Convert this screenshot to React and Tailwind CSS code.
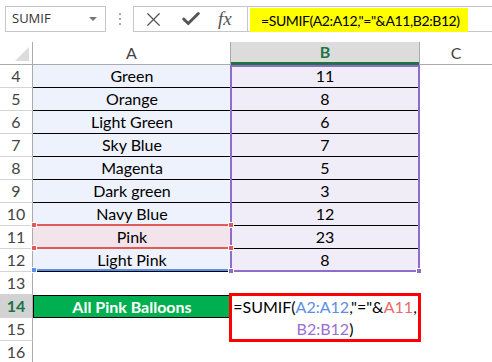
import { X, Check } from 'lucide-react';

const rows = [
  { n: 4, a: 'Green', b: 11 },
  { n: 5, a: 'Orange', b: 8 },
  { n: 6, a: 'Light Green', b: 6 },
  { n: 7, a: 'Sky Blue', b: 7 },
  { n: 8, a: 'Magenta', b: 5 },
  { n: 9, a: 'Dark green', b: 3 },
  { n: 10, a: 'Navy Blue', b: 12 },
  { n: 11, a: 'Pink', b: 23, pink: true },
  { n: 12, a: 'Light Pink', b: 8 },
];

const cellFont = { fontFamily: 'Lato, "Open Sans", sans-serif' };

const Handle = ({ className }) => (
  <div className={`absolute w-[6px] h-[6px] border border-white ${className}`}></div>
);

const App = () => {
  return (
    <div className="w-[492px] h-[362px] bg-white overflow-hidden text-[#222]" style={cellFont}>
      {/* Formula bar */}
      <div className="h-[42px] flex items-start pt-[6px] pl-[5px]">
        <div className="w-[101px] h-[26px] border border-[#c6c6c6] flex items-center justify-between pl-[6px] pr-[6px]">
          <span className="text-[13px] text-[#333]" style={{ fontFamily: '"Open Sans", sans-serif' }}>SUMIF</span>
          <span className="w-0 h-0 border-l-[4px] border-r-[4px] border-t-[4px] border-l-transparent border-r-transparent border-t-[#777] mr-[2px]"></span>
        </div>
        <div className="w-[27px] h-[26px] flex flex-col items-center justify-center gap-[3px]">
          <span className="w-[2px] h-[2px] bg-[#aaa]"></span>
          <span className="w-[2px] h-[2px] bg-[#aaa]"></span>
          <span className="w-[2px] h-[2px] bg-[#aaa]"></span>
        </div>
        <div className="w-[115px] h-[26px] border border-[#c6c6c6] flex items-center pl-[8px]">
          <X className="w-[23px] h-[23px] text-[#555]" strokeWidth={1.3} />
          <Check className="w-[22px] h-[22px] text-[#555] ml-[15px]" strokeWidth={3.2} />
          <span className="ml-[16px] text-[19px] italic text-[#555]" style={{ fontFamily: '"Liberation Serif", serif' }}>fx</span>
        </div>
        <div className="flex-1 h-[26px] border-y border-[#c6c6c6] pl-[2px] pt-[1px]">
          <div className="w-[218px] h-[24px] bg-[#ffff00] flex items-center pl-[11px] text-[14px] tracking-[-0.4px] text-black whitespace-nowrap">
            =SUMIF(A2:A12,"="&amp;A11,B2:B12)
          </div>
        </div>
      </div>

      {/* Sheet */}
      <div className="relative">
        {/* Column headers */}
        <div className="flex h-[23px]">
          <div className="w-[33px] border-r border-b border-[#ababab] relative">
            <div className="absolute right-[3px] bottom-[3px] w-0 h-0 border-b-[14px] border-l-[14px] border-b-[#dcdcdc] border-l-transparent"></div>
          </div>
          <div className="w-[198px] border-r border-b border-[#ababab] flex items-center justify-center text-[16px] text-[#444]">A</div>
          <div className="w-[188px] bg-[#dcdcdc] border-b-[3px] border-[#217346] flex items-center justify-center text-[16px] font-bold text-[#217346]">B</div>
          <div className="flex-1 border-l border-b border-[#ababab] flex items-center justify-center text-[16px] text-[#444]">C</div>
        </div>

        {rows.map((r) => (
          <div key={r.n} className="flex h-[23px] text-[16px]">
            <div className="w-[33px] border-r border-b border-[#ababab] border-b-[#d4d4d4] flex items-center justify-center text-[#444]">{r.n}</div>
            <div className={`w-[198px] border-b border-black flex items-center justify-center text-black ${r.pink ? 'bg-[#f2e4ea]' : 'bg-[#eef2fc]'}`}>{r.a}</div>
            <div className="w-[188px] bg-[#f1edf8] border-b border-black flex items-center justify-center text-black">{r.b}</div>
            <div className="flex-1"></div>
          </div>
        ))}

        <div className="flex h-[23px] text-[16px]">
          <div className="w-[33px] border-r border-b border-[#ababab] border-b-[#d4d4d4] flex items-center justify-center text-[#444]">13</div>
        </div>
        <div className="flex h-[23px] text-[16px]">
          <div className="w-[33px] bg-[#d2d2d2] border-r border-b border-[#ababab] border-b-[#d4d4d4] flex items-center justify-center font-bold text-[#217346]">14</div>
          <div className="w-[198px] bg-[#00b050] border border-black flex items-center justify-center font-bold text-white">All Pink Balloons</div>
        </div>
        <div className="flex h-[23px] text-[16px]">
          <div className="w-[33px] border-r border-b border-[#ababab] border-b-[#d4d4d4] flex items-center justify-center text-[#444]">15</div>
        </div>
        <div className="flex h-[23px] text-[16px]">
          <div className="w-[33px] border-r border-b border-[#ababab] border-b-[#d4d4d4] flex items-center justify-center text-[#444]">16</div>
        </div>

        {/* Range highlights */}
        <div className="absolute left-[33px] top-[227px] w-[198px] h-[2px] bg-[#5b8ee6]"></div>
        <Handle className="left-[31px] top-[225px] bg-[#5b8ee6]" />
        <div className="absolute left-[33px] top-[182px] w-[198px] h-[25px] border-y-2 border-[#e15a5a]"></div>
        <Handle className="left-[31px] top-[180px] bg-[#e15a5a]" />
        <Handle className="left-[31px] top-[203px] bg-[#e15a5a]" />
        <div className="absolute left-[230px] top-[23px] w-[190px] h-[207px] border-2 border-[#8e6cc8]"></div>
        <Handle className="left-[228px] top-[180px] bg-[#e15a5a]" />
        <Handle className="left-[228px] top-[203px] bg-[#e15a5a]" />
        <Handle className="left-[228px] top-[226px] bg-[#8e6cc8]" />
        <Handle className="left-[416px] top-[226px] bg-[#8e6cc8]" />

        {/* Formula in B14 */}
        <div className="absolute left-[229px] top-[251px] w-[192px] h-[49px] border-[3px] border-[#ff0000] bg-white flex items-center justify-center text-center text-[16px] leading-[22px] text-black">
          <div>
            =SUMIF(<span className="text-[#5b8ee6]">A2:A12</span>,"="&amp;<span className="text-[#e86a6a]">A11</span>,
            <br />
            <span className="text-[#9b6fd0]">B2:B12</span>)
          </div>
        </div>
      </div>
    </div>
  );
};

export default App;
